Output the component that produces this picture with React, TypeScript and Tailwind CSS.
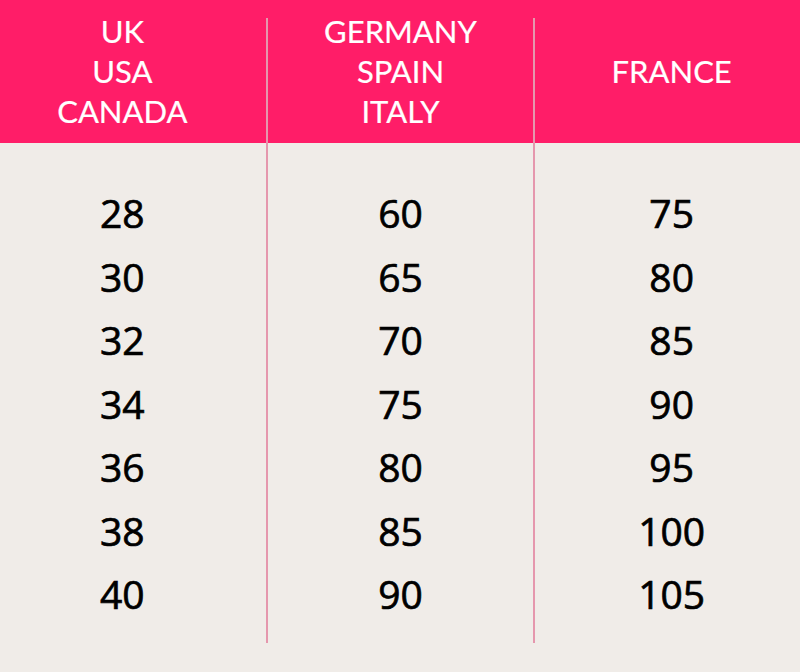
import { Fragment } from "react"

const columns = [
  { head: ["UK", "USA", "CANADA"], sizes: ["28", "30", "32", "34", "36", "38", "40"], pad: "pr-[22px]" },
  { head: ["GERMANY", "SPAIN", "ITALY"], sizes: ["60", "65", "70", "75", "80", "85", "90"], pad: "" },
  { head: ["FRANCE"], sizes: ["75", "80", "85", "90", "95", "100", "105"], pad: "pl-[8px]" },
]

export default function App() {
  return (
    <div
      className="w-[800px] h-[672px] overflow-hidden bg-[linear-gradient(to_bottom,#ff1d68_143px,#f0ece8_143px)] grid grid-cols-3"
      style={{ fontFamily: '"Open Sans", "Liberation Sans", sans-serif' }}
    >
      {columns.map((col, i) => (
        <div
          key={i}
          className={`mt-[18px] mb-[29px] flex flex-col ${i > 0 ? "border-l-2 border-[#e597ad]" : ""} ${i === 1 ? "-ml-px" : ""}`}
        >
          {/* header */}
          <div className={`h-[125px] pb-[19px] flex flex-col items-center justify-center ${col.pad}`}>
            <p className="text-center text-white text-[31px] leading-[40px] font-['Lato',sans-serif] [-webkit-text-stroke:0.2px_white]">
              {col.head.map((h, k) => (
                <Fragment key={h}>
                  {k > 0 && <br />}
                  {h}
                </Fragment>
              ))}
            </p>
          </div>
          {/* sizes */}
          <div className={`pt-[38px] flex flex-col items-center text-black text-[39px] leading-[63.5px] [-webkit-text-stroke:0.7px_black] ${col.pad}`}>
            {col.sizes.map((s, j) => (
              <div key={j}>{s}</div>
            ))}
          </div>
        </div>
      ))}
    </div>
  )
}
